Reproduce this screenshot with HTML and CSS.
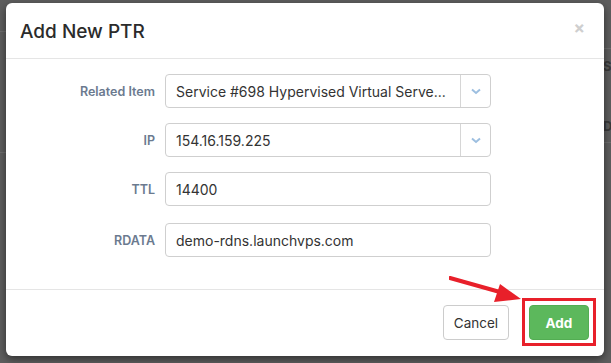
FILE: index.html
```html
<!DOCTYPE html>
<html lang="en">
<head>
    <meta charset="UTF-8">
    <meta name="viewport" content="width=device-width, initial-scale=1.0">
    <title>Add New PTR</title>
    <link rel="stylesheet" href="styles.css">
</head>
<body>
    <div class="backdrop">
        <div class="bg-line line-a"></div>
        <div class="bg-line line-b"></div>
        <div class="bg-line line-c"></div>
        <div class="bg-line line-d"></div>
        <span class="bg-text text-a">S</span>
        <span class="bg-text text-b">D</span>
    </div>

    <div class="modal">
        <div class="modal-header">
            <h4 class="modal-title">Add New PTR</h4>
            <span class="close">&times;</span>
        </div>

        <div class="modal-body">
            <div class="form-row">
                <label>Related Item</label>
                <div class="select">
                    <span class="select-value">Service #698 Hypervised Virtual Serve...</span>
                    <span class="select-arrow">
                        <svg width="10" height="7" viewBox="0 0 10 7"><path d="M1 1.5 L5 5 L9 1.5" fill="none" stroke="#9dbfe0" stroke-width="2"/></svg>
                    </span>
                </div>
            </div>
            <div class="form-row">
                <label>IP</label>
                <div class="select">
                    <span class="select-value">154.16.159.225</span>
                    <span class="select-arrow">
                        <svg width="10" height="7" viewBox="0 0 10 7"><path d="M1 1.5 L5 5 L9 1.5" fill="none" stroke="#9dbfe0" stroke-width="2"/></svg>
                    </span>
                </div>
            </div>
            <div class="form-row">
                <label>TTL</label>
                <div class="input">14400</div>
            </div>
            <div class="form-row last">
                <label>RDATA</label>
                <div class="input">demo-rdns.launchvps.com</div>
            </div>
        </div>

        <div class="modal-footer">
            <button class="btn btn-default">Cancel</button>
            <span class="highlight">
                <button class="btn btn-success">Add</button>
            </span>
        </div>

        <svg class="arrow" width="80" height="40" viewBox="0 0 80 40">
            <line x1="1" y1="3" x2="58" y2="19" stroke="#e8202a" stroke-width="4" stroke-linecap="round"/>
            <polygon points="72,24 51,9 45,27" fill="#e8202a"/>
        </svg>
    </div>
</body>
</html>
```

FILE: styles.css
```css
body {
    margin: 0;
    width: 611px;
    height: 363px;
    overflow: hidden;
    background-color: #5e5e5e;
    font-family: "Inter", "Open Sans", sans-serif;
    position: relative;
}
.backdrop {
    position: absolute;
    inset: 0;
}
.bg-line {
    position: absolute;
    height: 1px;
    background: #6e6e6e;
}
.line-a { left: 0; width: 8px; top: 31px; }
.line-b { left: 0; width: 8px; top: 152px; }
.line-c { left: 600px; width: 11px; top: 48px; }
.line-d { left: 600px; width: 11px; top: 142px; }
.bg-text {
    position: absolute;
    left: 603px;
    font-size: 13px;
    font-weight: bold;
    color: #3a3a3a;
}
.text-a { top: 58px; }
.text-b { top: 118px; }

.modal {
    position: relative;
    margin: 3px 0 0 6px;
    width: 598px;
    height: 353px;
    background: white;
    border-radius: 6px;
    box-shadow: 0 3px 9px rgba(0,0,0,0.5);
    display: flex;
    flex-direction: column;
}
.modal-header {
    height: 55px;
    padding: 0 19px 0 14px;
    border-bottom: 1px solid #e5e5e5;
    display: flex;
    align-items: center;
    justify-content: space-between;
}
.modal-title {
    margin: 0;
    font-size: 19px;
    font-weight: 500;
    color: #2b2b2b;
    padding-top: 2px;
}
.close {
    font-size: 17px;
    font-weight: bold;
    color: #cfcfcf;
    margin-top: -6px;
}
.modal-body {
    padding: 15px 0 0 0;
    height: 230px;
    box-sizing: border-box;
    display: flex;
    flex-direction: column;
    gap: 15px;
}
.form-row {
    display: grid;
    grid-template-columns: 149px 326px;
    column-gap: 10px;
    align-items: center;
}
.form-row.last {
    margin-top: 2px;
}
.form-row label {
    text-align: right;
    font-size: 12.5px;
    font-weight: 600;
    color: #6b7a8f;
}
.select, .input {
    height: 34px;
    box-sizing: border-box;
    border: 1px solid #cfcfcf;
    border-radius: 4px;
    display: flex;
    align-items: center;
    font-size: 14px;
    color: #333;
}
.input {
    padding-left: 10px;
}
.select-value {
    flex: 1;
    padding-left: 10px;
    white-space: nowrap;
    overflow: hidden;
}
.select-arrow {
    width: 29px;
    height: 100%;
    border-left: 1px solid #d6d6d6;
    display: flex;
    align-items: center;
    justify-content: center;
}
.modal-footer {
    border-top: 1px solid #e5e5e5;
    padding: 8px 8px 0 0;
    display: flex;
    justify-content: flex-end;
    align-items: flex-start;
    gap: 13px;
}
.btn {
    height: 35px;
    border-radius: 4px;
    font-family: "Inter", "Open Sans", sans-serif;
    font-size: 13.5px;
    padding: 0 8px;
}
.btn-default {
    margin-top: 7px;
    background: white;
    border: 1px solid #cccccc;
    color: #333;
    width: 66px;
}
.highlight {
    display: block;
    border: 3px solid #e8202a;
    padding: 4px 4px 3px 4px;
}
.btn-success {
    display: block;
    background: #5cb85c;
    border: 1px solid #53ad53;
    color: white;
    font-weight: bold;
    width: 60px;
}
.arrow {
    position: absolute;
    left: 443px;
    top: 272px;
}
```
